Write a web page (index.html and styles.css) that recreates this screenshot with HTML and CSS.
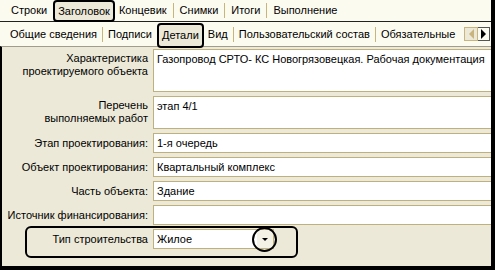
FILE: index.html
```html
<!DOCTYPE html>
<html lang="ru">
<head>
    <meta charset="UTF-8">
    <title>Детали</title>
    <link rel="stylesheet" href="styles.css">
</head>
<body>

    <div class="window">
        <div class="tabs tabs-main">
            <span class="tab">Строки</span>
            <span class="tab active">Заголовок</span>
            <span class="tab after-active">Концевик</span>
            <span class="tab sep">Снимки</span>
            <span class="tab sep">Итоги</span>
            <span class="tab sep">Выполнение</span>
        </div>

        <div class="tabs tabs-sub">
            <span class="tab">Общие сведения</span>
            <span class="tab sep">Подписи</span>
            <span class="tab active">Детали</span>
            <span class="tab after-active">Вид</span>
            <span class="tab sep">Пользовательский состав</span>
            <span class="tab sep">Обязательные</span>
            <div class="scroll-btns">
                <span class="scroll-btn prev"><i></i></span>
                <span class="scroll-btn next"><i></i></span>
            </div>
        </div>

        <!-- Details page -->
        <div class="panel">
            <div class="form">
                <label class="multi">Характеристика<br>проектируемого объекта</label>
                <div class="field">Газопровод СРТО- КС Новогрязовецкая. Рабочая документация</div>

                <label class="multi">Перечень<br>выполняемых работ</label>
                <div class="field">этап 4/1</div>

                <label>Этап проектирования:</label>
                <div class="field">1-я очередь</div>

                <label>Объект проектирования:</label>
                <div class="field">Квартальный комплекс</div>

                <label>Часть объекта:</label>
                <div class="field">Здание</div>

                <label>Источник финансирования:</label>
                <div class="field"></div>
            </div>

            <div class="highlight">
                <label>Тип строительства</label>
                <div class="field combo">
                    <span>Жилое</span>
                    <span class="combo-btn"><i></i></span>
                    <span class="circle"></span>
                </div>
            </div>
        </div>
    </div>

</body>
</html>
```

FILE: styles.css
```css
* {
    box-sizing: border-box;
}

body {
    margin: 0;
    width: 495px;
    height: 270px;
    overflow: hidden;
    font-family: "Liberation Sans", Arial, sans-serif;
    font-size: 11px;
    color: #000;
    background-color: #fcfbf0;
}

.window {
    display: flex;
    flex-direction: column;
    height: 270px;
    border-right: 4px solid #000;
}

/* Tab rows */
.tabs {
    display: flex;
    align-items: center;
    padding-left: 5px;
}
.tabs-main {
    height: 22px;
    border-bottom: 1px solid #222;
}
.tabs-sub {
    height: 24px;
}
.tab {
    height: 15px;
    line-height: 15px;
    padding: 0 6px;
    white-space: nowrap;
}
.tabs-sub .tab {
    padding: 0 5px;
}
.tab.sep {
    border-left: 1px solid #c8b47c;
}
.tab.active {
    background-color: #ece9d8;
    border: 2px solid #000;
    border-radius: 4px;
    padding: 0 3px;
}
.tabs-main .tab.active {
    height: 22px;
    line-height: 18px;
    align-self: flex-start;
}
.tabs-sub .tab.active {
    position: relative;
    z-index: 1;
    align-self: flex-start;
    height: 25px;
    line-height: 21px;
    margin-top: 1px;
    padding: 0 3px;
}
.tab.after-active {
    padding-left: 4px;
}

.scroll-btns {
    display: flex;
    margin-left: 4px;
}
.scroll-btn {
    width: 14px;
    height: 14px;
    display: flex;
    align-items: center;
    justify-content: center;
    background-color: #ece9d8;
    border: 1px solid #c8b47c;
}
.scroll-btn.next {
    width: 12px;
    border-color: #555;
    border-left: none;
    background-color: #fcfbf0;
}
.scroll-btn i {
    width: 0;
    height: 0;
    border-top: 5px solid transparent;
    border-bottom: 5px solid transparent;
}
.scroll-btn.prev i {
    border-right: 5px solid #c8b47c;
}
.scroll-btn.next i {
    border-left: 5px solid #000;
}

/* Panel */
.panel {
    flex: 1;
    overflow: hidden;
    padding-top: 2px;
    background-color: #ece9d8;
    border-top: 1px solid #a09d8c;
    border-left: 2px solid #000;
    border-bottom: 4px solid #000;
}

.form {
    display: grid;
    grid-template-columns: 146px 1fr;
    grid-template-rows: 43px 33px 20px 20px 20px 20px;
    column-gap: 5px;
    row-gap: 4px;
    margin-right: -3px;
}

label {
    text-align: right;
    align-self: center;
    white-space: nowrap;
    line-height: 13px;
}
label.multi {
    align-self: start;
    padding-top: 3px;
}

.field {
    background-color: #fff;
    border: 1px solid #c0b07c;
    padding: 2px 3px;
    line-height: 14px;
    white-space: nowrap;
    overflow: hidden;
}

/* Highlighted combo row */
.highlight {
    display: grid;
    grid-template-columns: 121px 121px;
    column-gap: 5px;
    align-items: start;
    width: 273px;
    height: 32px;
    margin: 1px 0 0 23px;
    padding-top: 1px;
    border: 2px solid #000;
    border-radius: 6px;
}
.highlight label {
    align-self: start;
    padding-top: 4px;
}
.combo {
    position: relative;
    display: flex;
    align-items: center;
    height: 20px;
    overflow: visible;
    padding: 0 0 0 3px;
}
.combo span:first-child {
    flex: 1;
}
.combo-btn {
    width: 16px;
    height: 18px;
    display: flex;
    align-items: center;
    justify-content: center;
    background-color: #f4f2e6;
}
.combo-btn i {
    width: 0;
    height: 0;
    border-left: 3px solid transparent;
    border-right: 3px solid transparent;
    border-top: 3px solid #000;
}
.circle {
    position: absolute;
    right: -4px;
    top: 1px;
    width: 25px;
    height: 25px;
    margin-top: -4px;
    border: 2px solid #000;
    border-radius: 50%;
}
```
